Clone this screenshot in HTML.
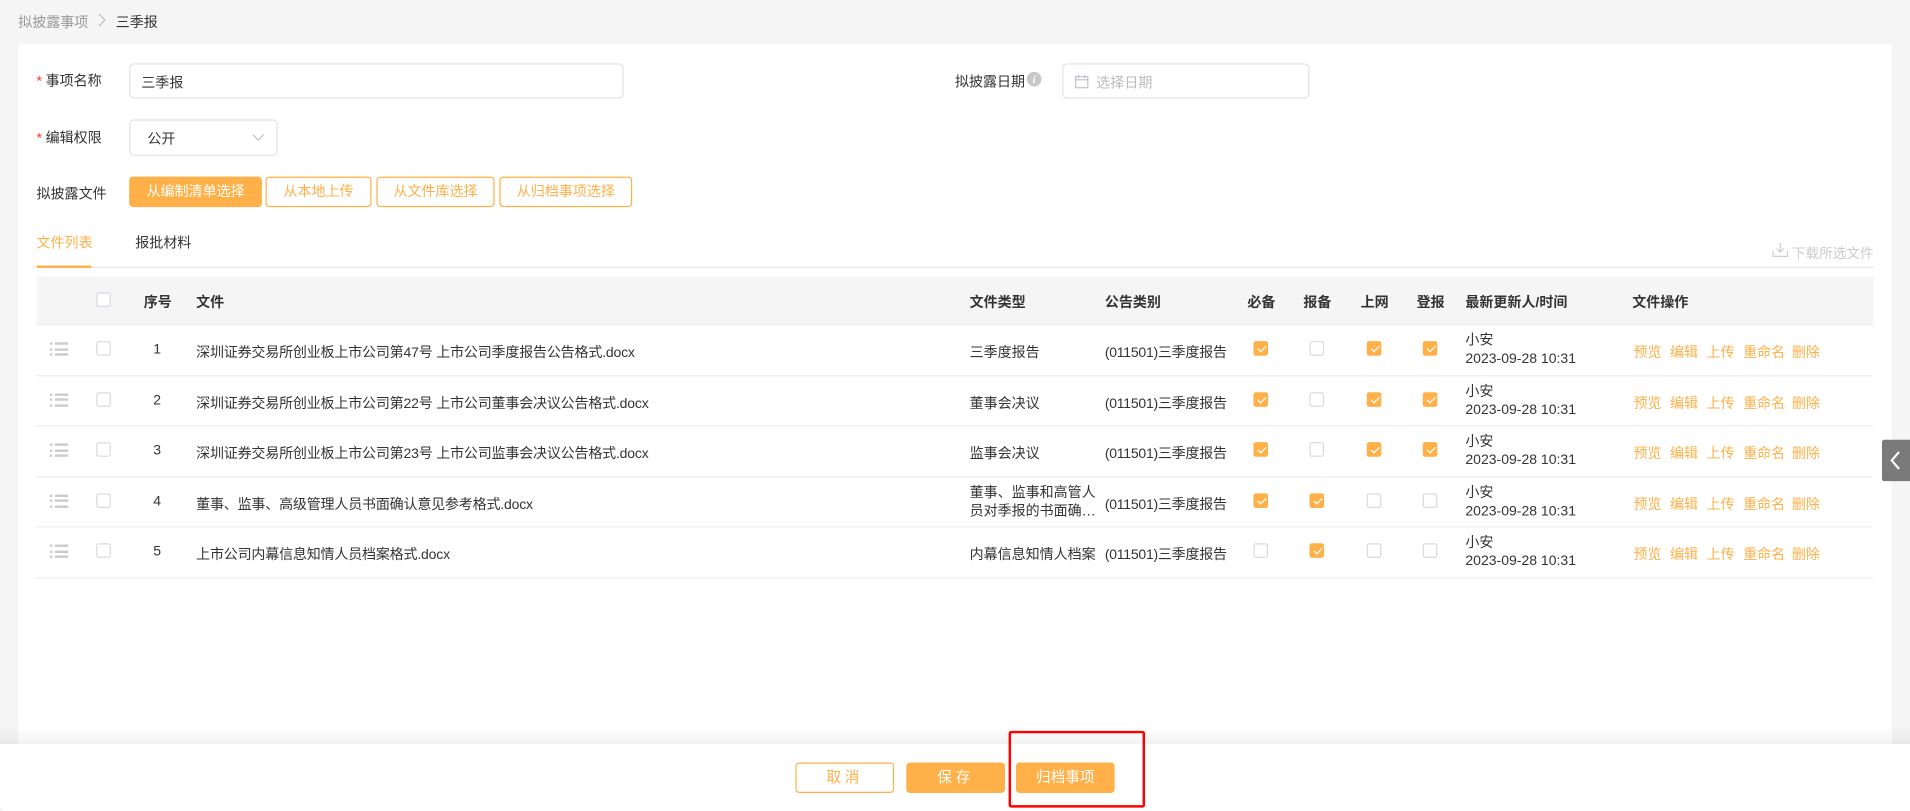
<!DOCTYPE html>
<html><head><meta charset="utf-8">
<style>
html,body{margin:0;padding:0;width:1910px;height:811px;overflow:hidden;background:#f5f5f5;}
#w{position:absolute;left:0;top:0;width:1568px;height:666px;transform:scale(1.21811);transform-origin:0 0;font-family:"Liberation Sans","Noto Sans CJK SC",sans-serif;font-size:11.5px;color:#333;}
.a{position:absolute;white-space:nowrap;}
.card{position:absolute;left:15px;top:36px;width:1538px;height:600px;background:#fff;}
.inp{position:absolute;border:1px solid #e2e2e2;border-radius:4px;background:#fff;box-sizing:border-box;}
.btn{position:absolute;top:145px;height:25px;box-sizing:border-box;border:1px solid #ffb048;border-radius:3px;color:#ffb048;text-align:center;line-height:25px;}
.req{color:#f33;margin-right:3px;}
.cb{position:absolute;width:12px;height:12px;border:1px solid #d8dbe2;border-radius:2px;background:#fff;box-sizing:border-box;}
.cb.on{background:#ffb048;border-color:#ffb048;}
.cb.on:after{content:"";position:absolute;left:3.5px;top:1px;width:3px;height:6px;border:solid #fff;border-width:0 1.2px 1.2px 0;transform:rotate(45deg);}
.line{position:absolute;left:30px;width:1508px;height:1px;background:#ebeef5;}
.drag{position:absolute;left:41px;width:15px;height:11px;}
.drag i{position:absolute;height:2px;background:#ccc;}
.op{color:#ffb048;}
.fb{position:absolute;top:626px;width:81px;height:25px;border-radius:3px;box-sizing:border-box;text-align:center;line-height:25px;font-size:12px;letter-spacing:3px;}
</style></head><body><div id="w">
<div class="a" style="left:15px;top:10px;color:#999;">拟披露事项</div>
<svg class="a" style="left:81px;top:11px" width="6" height="11" viewBox="0 0 6 11"><path d="M0.5 0.5L5 5.5L0.5 10.5" fill="none" stroke="#bbb"/></svg>
<div class="a" style="left:95px;top:10px;color:#333;">三季报</div>

<div class="card"></div>
<div class="a" style="left:30px;top:58px;"><span class="req">*</span>事项名称</div>
<div class="inp" style="left:106px;top:52px;width:406px;height:29px;"><span class="a" style="left:9px;top:7px;">三季报</span></div>
<div class="a" style="left:784px;top:59px;">拟披露日期</div>
<div class="a" style="left:843px;top:59px;width:12px;height:12px;border-radius:50%;background:#c8c8c8;color:#fff;font-size:9px;font-style:italic;font-weight:bold;text-align:center;line-height:12px;font-family:'Liberation Serif',serif;">i</div>
<div class="inp" style="left:872px;top:52px;width:203px;height:29px;">
<svg class="a" style="left:9px;top:8px" width="12" height="12" viewBox="0 0 12 12"><rect x="1" y="2" width="10" height="9" fill="none" stroke="#c0c4cc"/><line x1="1" y1="4.5" x2="11" y2="4.5" stroke="#c0c4cc"/><line x1="3.5" y1="0.5" x2="3.5" y2="3" stroke="#c0c4cc"/><line x1="8.5" y1="0.5" x2="8.5" y2="3" stroke="#c0c4cc"/></svg>
<span class="a" style="left:27px;top:7px;color:#bbb;">选择日期</span></div>

<div class="a" style="left:30px;top:105px;"><span class="req">*</span>编辑权限</div>
<div class="inp" style="left:106px;top:98px;width:122px;height:30px;"><span class="a" style="left:14px;top:7px;">公开</span>
<svg class="a" style="left:100px;top:11px" width="10" height="6" viewBox="0 0 10 6"><path d="M0.5 0.5L5 5L9.5 0.5" fill="none" stroke="#c0c4cc"/></svg></div>

<div class="a" style="left:30px;top:151px;">拟披露文件</div>
<div class="btn" style="left:106px;width:109px;background:#ffb048;color:#fff;">从编制清单选择</div>
<div class="btn" style="left:218px;width:87px;">从本地上传</div>
<div class="btn" style="left:309px;width:97px;">从文件库选择</div>
<div class="btn" style="left:410px;width:109px;">从归档事项选择</div>

<div class="a" style="left:30px;top:191px;color:#ffb048;">文件列表</div>
<div class="a" style="left:111px;top:191px;">报批材料</div>
<div class="line" style="top:219px;background:#e4e7ed;"></div>
<div class="a" style="left:30px;top:218px;width:45px;height:2px;background:#ffb048;"></div>
<svg class="a" style="left:1455px;top:199px" width="13" height="12" viewBox="0 0 13 12"><path d="M6.5 0.5V8M3.5 5L6.5 8L9.5 5M0.5 7V11.5H12.5V7" fill="none" stroke="#ccc"/></svg>
<div class="a" style="left:1471px;top:200px;color:#ccc;font-size:11.2px;">下载所选文件</div>

<div class="a" style="left:30px;top:227px;width:1508px;height:39px;background:#f5f5f5;"></div>
<div class="cb" style="left:79px;top:240px;"></div>
<div class="a" style="left:118px;top:240px;font-weight:bold;">序号</div>
<div class="a" style="left:161px;top:240px;font-weight:bold;">文件</div>
<div class="a" style="left:796px;top:240px;font-weight:bold;">文件类型</div>
<div class="a" style="left:907px;top:240px;font-weight:bold;">公告类别</div>
<div class="a" style="left:1024px;top:240px;font-weight:bold;">必备</div>
<div class="a" style="left:1070px;top:240px;font-weight:bold;">报备</div>
<div class="a" style="left:1117px;top:240px;font-weight:bold;">上网</div>
<div class="a" style="left:1163px;top:240px;font-weight:bold;">登报</div>
<div class="a" style="left:1203px;top:240px;font-weight:bold;">最新更新人/时间</div>
<div class="a" style="left:1340px;top:240px;font-weight:bold;">文件操作</div>
<div class="line" style="top:266px;"></div>

<div id="rows"></div>
<script>
var rows=[
["深圳证券交易所创业板上市公司第47号 上市公司季度报告公告格式.docx","三季度报告",[1,0,1,1]],
["深圳证券交易所创业板上市公司第22号 上市公司董事会决议公告格式.docx","董事会决议",[1,0,1,1]],
["深圳证券交易所创业板上市公司第23号 上市公司监事会决议公告格式.docx","监事会决议",[1,0,1,1]],
["董事、监事、高级管理人员书面确认意见参考格式.docx","",[1,1,0,0]],
["上市公司内幕信息知情人员档案格式.docx","内幕信息知情人档案",[0,1,0,0]]];
var h="",cx=[1029,1075,1122,1168];
for(var i=0;i<5;i++){var t=266+i*41.5,c=t+21;
h+='<div class="drag" style="top:'+(c-6)+'px"><i style="left:0;top:0;width:2px"></i><i style="left:4px;top:0;width:11px"></i><i style="left:0;top:4.5px;width:2px"></i><i style="left:4px;top:4.5px;width:11px"></i><i style="left:0;top:9px;width:2px"></i><i style="left:4px;top:9px;width:11px"></i></div>';
h+='<div class="cb" style="left:79px;top:'+(c-7)+'px"></div>';
h+='<div class="a" style="left:120px;width:18px;text-align:center;top:'+(c-6)+'px">'+(i+1)+'</div>';
h+='<div class="a" style="left:161px;top:'+(c-6)+'px;letter-spacing:-0.15px">'+rows[i][0]+'</div>';
if(i==3)h+='<div class="a" style="left:796px;top:'+(c-14)+'px;line-height:15px">董事、监事和高管人<br>员对季报的书面确…</div>';
else h+='<div class="a" style="left:796px;top:'+(c-6)+'px">'+rows[i][1]+'</div>';
h+='<div class="a" style="left:907px;top:'+(c-6)+'px;letter-spacing:-0.2px">(011501)三季度报告</div>';
for(var k=0;k<4;k++)h+='<div class="cb'+(rows[i][2][k]?' on':'')+'" style="left:'+cx[k]+'px;top:'+(c-7)+'px"></div>';
h+='<div class="a" style="left:1203px;top:'+(c-14)+'px;line-height:15px">小安<br>2023-09-28 10:31</div>';
h+='<div class="a op" style="left:1341px;top:'+(c-6)+'px">预览</div><div class="a op" style="left:1371px;top:'+(c-6)+'px">编辑</div><div class="a op" style="left:1401px;top:'+(c-6)+'px">上传</div><div class="a op" style="left:1431px;top:'+(c-6)+'px">重命名</div><div class="a op" style="left:1471px;top:'+(c-6)+'px">删除</div>';
h+='<div class="line" style="top:'+(t+41.5)+'px"></div>';}
document.getElementById("rows").innerHTML=h;
</script>

<div class="a" style="left:1545px;top:361px;width:23px;height:34px;background:#7a7a7a;border-radius:2px 0 0 2px;">
<svg class="a" style="left:6px;top:9px" width="10" height="16" viewBox="0 0 10 16"><path d="M8 1L2 8L8 15" fill="none" stroke="#fff" stroke-width="1.8"/></svg></div>

<div class="a" style="left:0;top:596px;width:1568px;height:15px;background:linear-gradient(rgba(0,0,0,0),rgba(0,0,0,0.05));"></div>
<div class="a" style="left:0;top:611px;width:1568px;height:55px;background:#fff;border-radius:0 0 0 6px;"></div>
<div class="fb" style="left:653px;border:1px solid #ffb048;color:#ffb048;line-height:23px;">取消</div>
<div class="fb" style="left:744px;background:#ffb048;color:#fff;">保存</div>
<div class="fb" style="left:834px;background:#ffb048;color:#fff;letter-spacing:0;">归档事项</div>
<div class="a" style="left:828px;top:600px;width:112px;height:63px;border:2.5px solid #f00;border-radius:2px;box-sizing:border-box;"></div>
</div></body></html>
